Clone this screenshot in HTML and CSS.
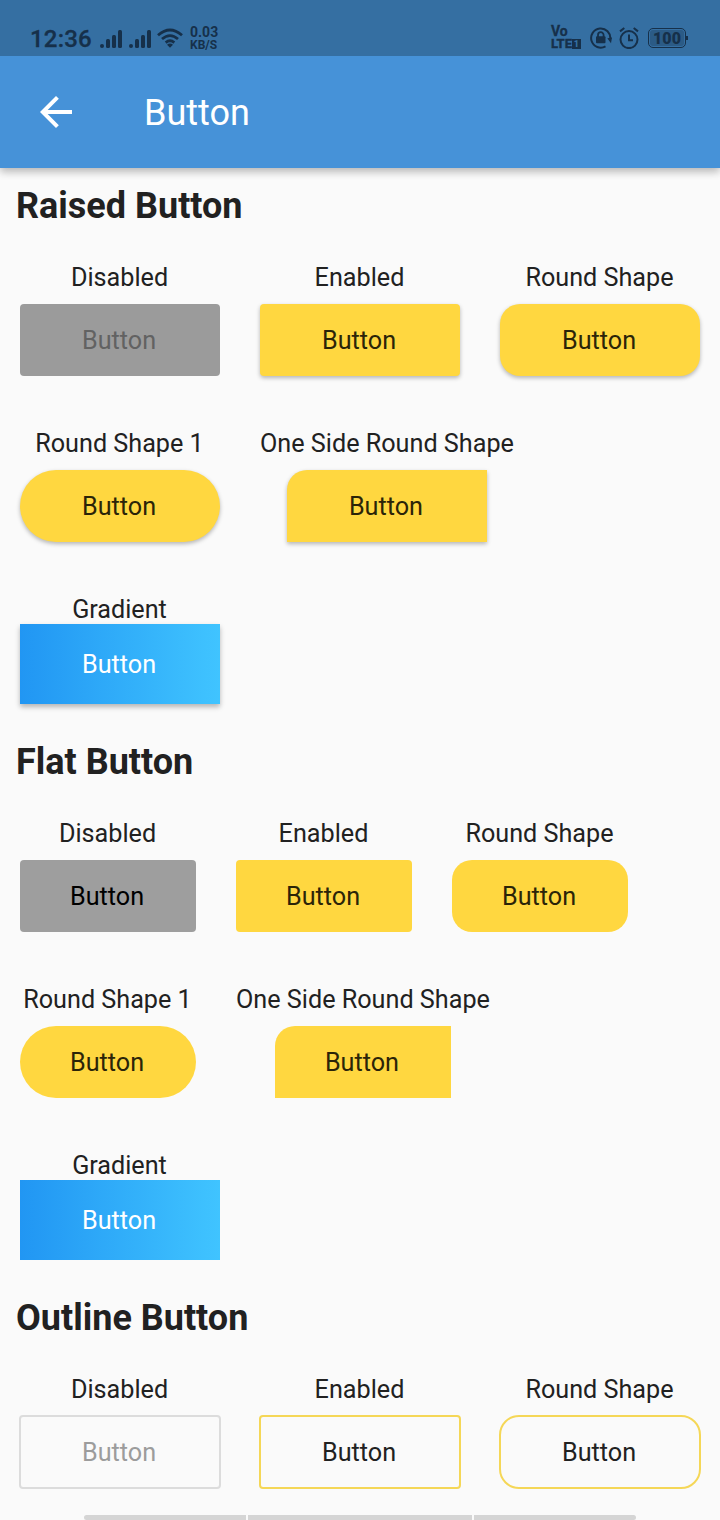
FILE: index.html
```html
<!DOCTYPE html>
<html lang="en">
<head>
<meta charset="utf-8">
<title>Button</title>
<link rel="stylesheet" href="styles.css">
</head>
<body>
<div class="screen">
  <div class="status">
    <div class="status-left">
      <span class="clock">12:36</span>
      <svg class="signals" width="52" height="18" viewBox="0 0 52 18" fill="#16304a"><circle cx="2" cy="16" r="2"/><rect x="6" y="9" width="4" height="9" rx="1.5"/><rect x="12" y="5" width="4" height="13" rx="1.5"/><rect x="18" y="0" width="4" height="18" rx="1.5"/><circle cx="31" cy="16" r="2"/><rect x="35" y="9" width="4" height="9" rx="1.5"/><rect x="41" y="5" width="4" height="13" rx="1.5"/><rect x="47" y="0" width="4" height="18" rx="1.5"/></svg>
      <svg class="wifi" width="26" height="20" viewBox="0 0 26 20" fill="none" stroke="#16304a" stroke-width="2.8"><path d="M1 7.2Q13-3.2 25 7.2M5 11Q13 4.2 21 11M8.7 14.6Q13 11 17.3 14.6"/><path d="M10 16.8Q13 14 16 16.8L13 19.8Z" fill="#16304a" stroke="none"/></svg>
      <span class="speed">0.03<small>KB/S</small></span>
    </div>
    <div class="status-right">
      <div class="volte"><span class="vo">Vo</span><span class="lte">LTE<b>1</b></span></div>
      <svg class="rotate" width="22" height="22" viewBox="0 0 22 22"><path d="M15.5 19.4A9.6 9.6 0 1 1 20.3 12" fill="none" stroke="#16304a" stroke-width="2"/><path d="M17.3 11.2L22 10.6L21 16.2Z" fill="#16304a"/><rect x="6" y="9.3" width="9.5" height="7" rx="1" fill="#16304a"/><path d="M8 10V8a2.8 2.8 0 0 1 5.6 0v2" fill="none" stroke="#16304a" stroke-width="1.8"/></svg>
      <svg class="alarm" width="20" height="22" viewBox="0 0 20 22" fill="none" stroke="#16304a" stroke-width="2"><circle cx="10" cy="12.6" r="8.5"/><path d="M10 7.5V13.3H14M1 4.4L5.3 1M19 4.4L14.7 1"/></svg>
      <div class="battery"><span>100</span></div>
    </div>
  </div>
  <header class="appbar">
    <svg class="back" width="32" height="32" viewBox="4 4 16 16" fill="#fff"><path d="M20 11H7.83l5.59-5.59L12 4l-8 8 8 8 1.41-1.41L7.83 13H20v-2z"/></svg>
    <h1>Button</h1>
  </header>
  <main>
    <section class="raised">
      <h2>Raised Button</h2>
      <div class="row">
        <div class="item"><p>Disabled</p><button class="btn off">Button</button></div>
        <div class="item"><p>Enabled</p><button class="btn">Button</button></div>
        <div class="item"><p>Round Shape</p><button class="btn round">Button</button></div>
      </div>
      <div class="row">
        <div class="item"><p>Round Shape 1</p><button class="btn pill">Button</button></div>
        <div class="item"><p class="wide">One Side Round Shape</p><button class="btn one-side">Button</button></div>
      </div>
      <div class="row">
        <div class="item"><p>Gradient</p><button class="btn gradient">Button</button></div>
      </div>
    </section>
    <section class="flat">
      <h2>Flat Button</h2>
      <div class="row">
        <div class="item"><p>Disabled</p><button class="btn off">Button</button></div>
        <div class="item"><p>Enabled</p><button class="btn">Button</button></div>
        <div class="item"><p>Round Shape</p><button class="btn round">Button</button></div>
      </div>
      <div class="row">
        <div class="item"><p>Round Shape 1</p><button class="btn pill">Button</button></div>
        <div class="item"><p class="wide">One Side Round Shape</p><button class="btn one-side">Button</button></div>
      </div>
      <div class="row">
        <div class="item"><p>Gradient</p><button class="btn gradient">Button</button></div>
      </div>
    </section>
    <section class="outline">
      <h2>Outline Button</h2>
      <div class="row">
        <div class="item"><p>Disabled</p><button class="btn off">Button</button></div>
        <div class="item"><p>Enabled</p><button class="btn">Button</button></div>
        <div class="item"><p>Round Shape</p><button class="btn round">Button</button></div>
      </div>
    </section>
  </main>
  <div class="gesture"><i></i><i></i><i></i></div>
</div>
</body>
</html>
```
FILE: styles.css
```css
* { box-sizing: border-box; }
body { margin: 0; font-family: Roboto, sans-serif; color: #212121; }
.screen { position: relative; width: 720px; height: 1520px; overflow: hidden; background: #fafafa; }

.status { position: relative; z-index: 1; display: flex; justify-content: space-between; height: 56px; padding: 24px 32px 0 30px; background: #356fa2; color: #16304a; }
.status-left, .status-right { display: flex; align-items: flex-start; }
.clock { width: 70px; font-size: 24px; line-height: 30px; font-weight: 500; letter-spacing: .2px; -webkit-text-stroke: .3px #16304a; }
.signals { margin-top: 6px; }
.wifi { margin: 4px 0 0 5px; }
.speed { margin: 2px 0 0 7px; font-size: 14px; line-height: 13px; font-weight: 700; }
.speed small { display: block; font-size: 12px; }
.volte { display: flex; flex-direction: column; width: 33px; font-weight: 700; }
.vo { height: 13px; font-size: 14px; line-height: 15px; -webkit-text-stroke: .3px #16304a; }
.lte { display: flex; align-items: center; height: 13px; font-weight: 700; font-size: 13px; line-height: 13px; -webkit-text-stroke: .4px #16304a; }
.lte b { width: 9px; height: 10px; background: #16304a; color: #356fa2; font-size: 9px; line-height: 10px; text-align: center; -webkit-text-stroke: 0; }
.rotate { margin: 3px 0 0 6px; }
.alarm { margin: 3px 0 0 7px; }
.battery { position: relative; width: 38px; height: 20px; margin: 4px 2px 0 9px; border: 1px solid #16304a; border-radius: 5px; padding: 1px; }
.battery span { display: block; height: 16px; border-radius: 3px; background: #2b5b86; font-size: 16px; line-height: 17px; font-weight: 900; text-align: center; }
.battery::after { content: ""; position: absolute; right: -3px; top: 7px; width: 2px; height: 4px; background: #16304a; }

.appbar { position: relative; display: flex; align-items: center; height: 112px; padding-left: 40px; background: #4692d8; color: #fff; box-shadow: 0 4px 8px rgba(0, 0, 0, .2), 0 1px 10px rgba(0, 0, 0, .12); }
h1 { margin: 2px 0 0 72px; font-size: 36px; line-height: 42px; font-weight: 400; }

main { height: 1352px; overflow: hidden; }
section { padding-top: 16px; }
h2 { height: 42px; margin: 0 0 16px 16px; font-size: 36px; line-height: 44px; font-weight: 700; }
.row { display: flex; }
.item { display: flex; flex-direction: column; align-items: center; padding: 20px; }
.item p { height: 30px; margin: 0 .5px 0 -.5px; font-size: 25.2px; line-height: 32px; white-space: nowrap; }
.item .wide { margin: 0; }
.btn { width: 200px; height: 72px; margin: 12px 0; padding: 2px 2px 0 0; border: 0; border-radius: 4px; background: #ffd740; color: #2b2408; font: 400 25.2px/70px Roboto, sans-serif; }
.raised .btn { box-shadow: 0 2px 4px rgba(0, 0, 0, .28); }
.raised .off { background: #9b9b9b; color: #626262; box-shadow: none; }
.flat .btn { width: 176px; }
.flat .off { background: #9e9e9e; color: #000; }
.btn.round { border-radius: 20px; }
.btn.pill { border-radius: 36px; }
.btn.one-side { border-radius: 20px 0 0 0; }
.item .btn.gradient { width: 200px; height: 80px; margin: 0; border-radius: 0; background: linear-gradient(90deg, #2196f3, #40c4ff); color: #fff; line-height: 78px; }
.raised .btn.gradient { box-shadow: 0 3px 5px rgba(0, 0, 0, .28); }
.outline .btn { width: 202px; height: 74px; margin: 11px -1px; border: 2px solid #f5d757; background: none; color: #212121; line-height: 68px; }
.outline .off { border-color: #dcdcdc; color: #9c9c9c; }

.gesture { position: absolute; left: 84px; bottom: 0; display: flex; gap: 2px; width: 552px; height: 5px; border-radius: 3px; overflow: hidden; }
.gesture i { width: 162px; background: #d5d5d5; }
.gesture i:nth-child(2) { width: 224px; }
```
